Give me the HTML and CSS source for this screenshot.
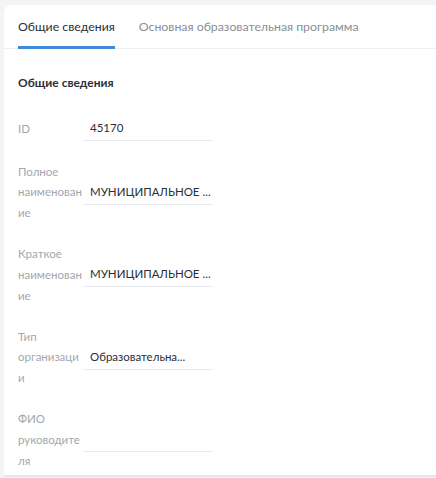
FILE: index.html
```html
<!DOCTYPE html>
<html lang="ru">
<head>
<meta charset="utf-8">
<link rel="stylesheet" href="styles.css">
</head>
<body>
<div class="card">
  <div class="tabs">
    <div class="tab active">Общие сведения</div>
    <div class="tab">Основная образовательная программа</div>
  </div>
  <div class="content">
    <div class="section-title">Общие сведения</div>
    <div class="form">
      <div class="row">
        <div class="label">ID</div>
        <div class="value">45170</div>
      </div>
      <div class="row">
        <div class="label">Полное наименование</div>
        <div class="value">МУНИЦИПАЛЬНОЕ ...</div>
      </div>
      <div class="row">
        <div class="label">Краткое наименование</div>
        <div class="value">МУНИЦИПАЛЬНОЕ ...</div>
      </div>
      <div class="row">
        <div class="label">Тип организации</div>
        <div class="value">Образовательна...</div>
      </div>
      <div class="row">
        <div class="label">ФИО руководителя</div>
        <div class="value"></div>
      </div>
    </div>
  </div>
</div>
</body>
</html>
```
FILE: styles.css
```css
html, body {
  margin: 0;
  padding: 0;
  background: #f4f4f5;
  overflow: hidden;
  height: 478px;
}
body {
  font-family: Lato, "Noto Sans", sans-serif;
  color: #333;
}
.card {
  margin: 5px -20px 0 4px;
  height: 472px;
  background: #fff;
  border-radius: 8px 0 0 0;
  border-bottom: 2px solid #e2e5ea;
  box-sizing: border-box;
}
.tabs {
  display: flex;
  gap: 24px;
  padding: 0 0 0 14px;
  border-bottom: 1px solid #eef1f4;
}
.tab {
  font-size: 12.3px;
  color: #8a8f96;
  padding: 14px 0 12px;
  border-bottom: 3px solid transparent;
  margin-bottom: -1px;
}
.tab.active {
  color: #2b2f35;
  border-bottom-color: #3d8bd9;
}
.content {
  padding: 26px 14px 0;
}
.section-title {
  font-size: 12px;
  font-weight: 700;
  color: #2b2f35;
  line-height: 16px;
}
.form {
  display: flex;
  flex-direction: column;
  gap: 20.5px;
  margin-top: 26px;
}
.row {
  display: flex;
  align-items: center;
}
.label {
  width: 65px;
  font-size: 11.5px;
  line-height: 20.7px;
  color: #a3a7ad;
  overflow-wrap: anywhere;
}
.value {
  width: 130px;
  box-sizing: border-box;
  height: 24px;
  padding: 0 0 0 7px;
  font-size: 11.5px;
  line-height: 22px;
  color: #2b2f35;
  border-bottom: 1px solid #e8eaed;
  white-space: nowrap;
  overflow: hidden;
}
```
